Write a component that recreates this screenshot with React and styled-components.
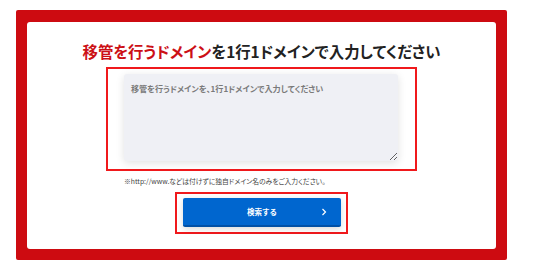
import React from "react";
import styled, { createGlobalStyle } from "styled-components";

const GlobalStyle = createGlobalStyle`
  html, body {
    margin: 0;
    padding: 0;
    background: #ffffff;
  }
  body {
    font-family: "Noto Sans CJK JP", "Noto Sans", sans-serif;
  }
`;

const Page = styled.div`
  width: 550px;
  height: 272px;
  box-sizing: border-box;
  padding: 10px 43px 12px 16px;
`;

const Frame = styled.section`
  height: 250px;
  box-sizing: border-box;
  background: #cd0b11;
  border-radius: 2px;
  padding: 12px 11px 11px 11px;
`;

const Card = styled.div`
  height: 100%;
  background: #ffffff;
  border-radius: 3px;
  display: flex;
  flex-direction: column;
  align-items: center;
  padding-top: 18px;
  box-sizing: border-box;
`;

const Title = styled.h2`
  margin: 0;
  font-size: 15.4px;
  font-weight: 700;
  line-height: 22px;
  color: #222222;
  font-feature-settings: "palt";
`;

const Accent = styled.span`
  color: #cc1016;
`;

const Highlight = styled.div`
  border: 2px solid #f0191c;
  box-sizing: border-box;
  margin-top: ${(p) => p.$top}px;
  padding: ${(p) => p.$pad};
`;

const DomainInput = styled.textarea`
  display: block;
  width: 274px;
  height: 87px;
  box-sizing: border-box;
  border: none;
  border-radius: 3px;
  background: #eff0f5;
  box-shadow: 0 2px 8px rgba(0, 0, 0, 0.12);
  padding: 9px 7px;
  font-family: inherit;
  font-size: 8.1px;
  font-weight: 700;
  color: #333;
  font-feature-settings: "palt";
  resize: vertical;
  outline: none;

  &::placeholder {
    color: #7a7a7a;
  }
`;

const Note = styled.p`
  margin: 5px 0 0 -1px;
  width: 274px;
  font-size: 6.8px;
  line-height: 10px;
  color: #444;
  font-feature-settings: "palt";
`;

const SearchButton = styled.button`
  width: 158px;
  height: 29px;
  border: none;
  border-bottom: 2px solid #0050a6;
  border-radius: 2px;
  background: #0066cf;
  box-shadow: 0 2px 6px rgba(0, 0, 0, 0.15);
  color: #ffffff;
  font-family: inherit;
  font-size: 7.5px;
  font-weight: 700;
  position: relative;
  display: flex;
  align-items: center;
  justify-content: center;
  cursor: pointer;
`;

const Chevron = styled.svg`
  position: absolute;
  right: 14px;
  top: 50%;
  transform: translateY(-50%);
`;

export default function App() {
  return (
    <>
      <GlobalStyle />
      <Page>
        <Frame>
          <Card>
            <Title>
              <Accent>移管を行うドメイン</Accent>を1行1ドメインで入力してください
            </Title>
            <Highlight $top={5} $pad="5px 17px 8px 16px">
              <DomainInput placeholder="移管を行うドメインを、1行1ドメインで入力してください" />
            </Highlight>
            <Note>※http://www.などは付けずに独自ドメイン名のみをご入力ください。</Note>
            <Highlight $top={6} $pad="4px 5px 5px 6px">
              <SearchButton type="button">
                検索する
                <Chevron width="6" height="8" viewBox="0 0 6 8">
                  <path d="M1.5 1 L4.5 4 L1.5 7" fill="none" stroke="#fff" strokeWidth="1.2" />
                </Chevron>
              </SearchButton>
            </Highlight>
          </Card>
        </Frame>
      </Page>
    </>
  );
}
